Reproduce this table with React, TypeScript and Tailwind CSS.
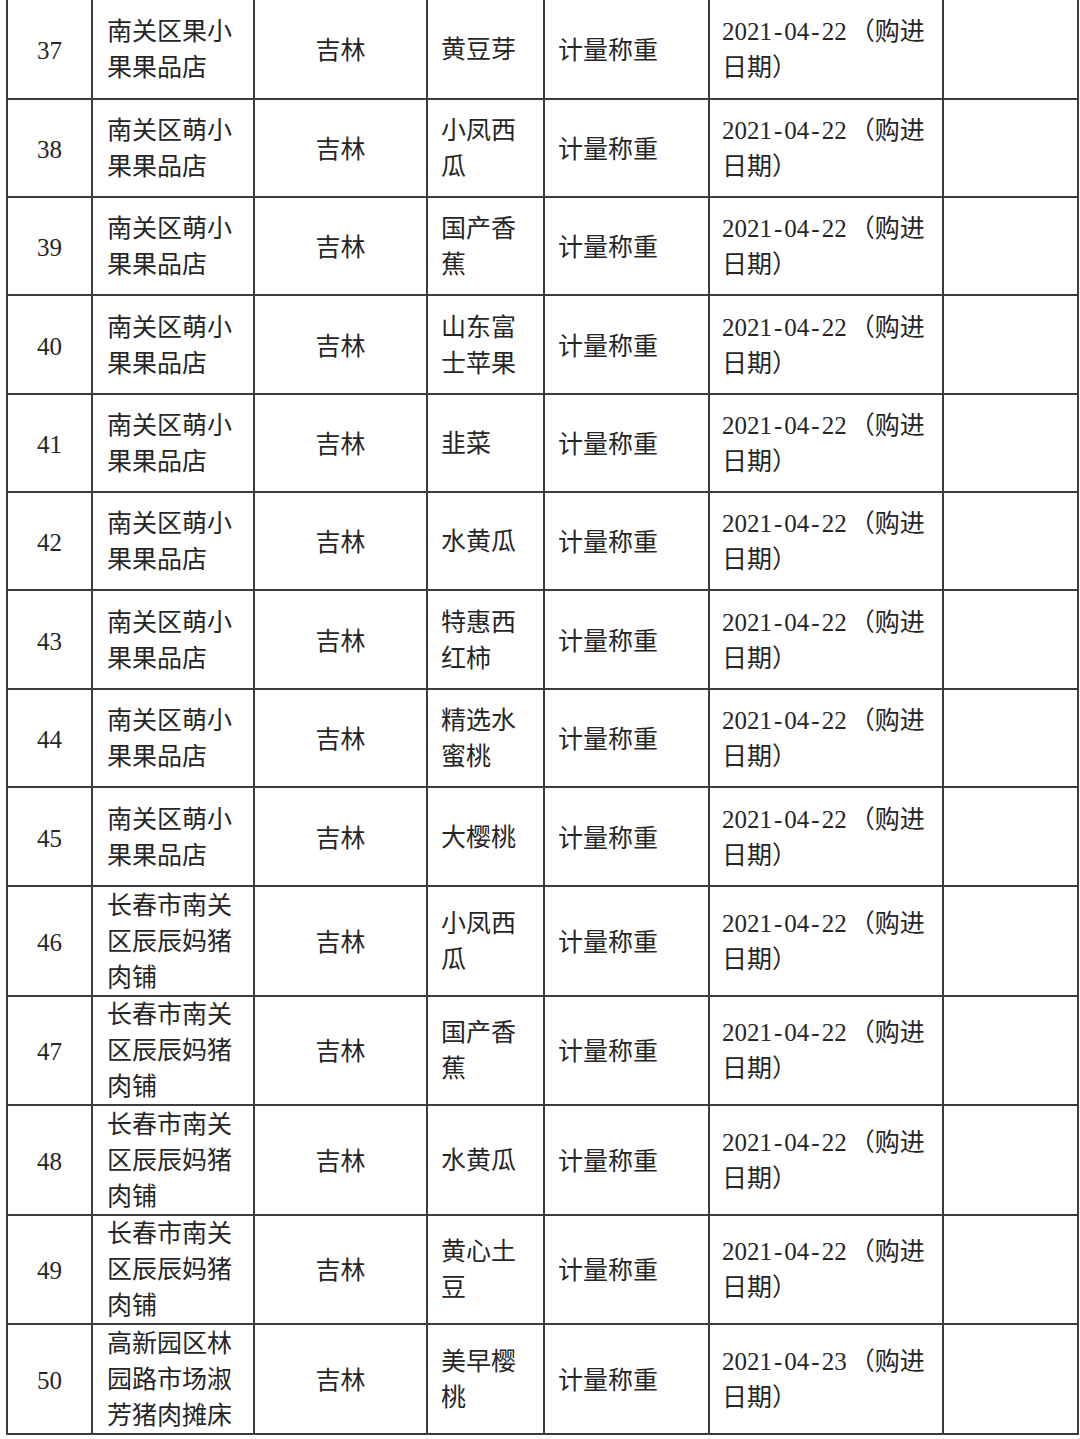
import React from "react";

type Row = {
  no: number;
  shop: string[];
  item: string[];
  date: string;
  h: number;
};

const mengxiao = ["南关区萌小", "果果品店"];
const chenchen = ["长春市南关", "区辰辰妈猪", "肉铺"];

const rows: Row[] = [
  { no: 37, shop: ["南关区果小", "果果品店"], item: ["黄豆芽"], date: "2021-04-22", h: 100 },
  { no: 38, shop: mengxiao, item: ["小凤西", "瓜"], date: "2021-04-22", h: 98 },
  { no: 39, shop: mengxiao, item: ["国产香", "蕉"], date: "2021-04-22", h: 98 },
  { no: 40, shop: mengxiao, item: ["山东富", "士苹果"], date: "2021-04-22", h: 99 },
  { no: 41, shop: mengxiao, item: ["韭菜"], date: "2021-04-22", h: 98 },
  { no: 42, shop: mengxiao, item: ["水黄瓜"], date: "2021-04-22", h: 98 },
  { no: 43, shop: mengxiao, item: ["特惠西", "红柿"], date: "2021-04-22", h: 99 },
  { no: 44, shop: mengxiao, item: ["精选水", "蜜桃"], date: "2021-04-22", h: 98 },
  { no: 45, shop: mengxiao, item: ["大樱桃"], date: "2021-04-22", h: 99 },
  { no: 46, shop: chenchen, item: ["小凤西", "瓜"], date: "2021-04-22", h: 109 },
  { no: 47, shop: chenchen, item: ["国产香", "蕉"], date: "2021-04-22", h: 110 },
  { no: 48, shop: chenchen, item: ["水黄瓜"], date: "2021-04-22", h: 109 },
  { no: 49, shop: chenchen, item: ["黄心土", "豆"], date: "2021-04-22", h: 110 },
  { no: 50, shop: ["高新园区林", "园路市场淑", "芳猪肉摊床"], item: ["美早樱", "桃"], date: "2021-04-23", h: 110 },
];

const cell = "flex items-center border-r-2 border-b-2 border-[#3c3c3c]";

function Lines({ lines }: { lines: string[] }) {
  return (
    <div className="relative top-[1px] whitespace-nowrap">
      {lines.map((l, i) => (
        <div key={i}>{l}</div>
      ))}
    </div>
  );
}

// the source font has wide hyphens, so pad them a little
function DateText({ date }: { date: string }) {
  const parts = date.split("-");
  return (
    <div className="relative top-[1px] whitespace-nowrap">
      <div>
        {parts.map((p, i) => (
          <React.Fragment key={i}>
            {i > 0 && <span className="px-[2px]">-</span>}
            {p}
          </React.Fragment>
        ))}
        <span className="pl-[3px]">（购进</span>
      </div>
      <div>日期）</div>
    </div>
  );
}

export default function App() {
  return (
    <div
      className="w-[1080px] h-[1439px] bg-white text-[#262626] text-[25px] leading-[36px] overflow-hidden"
      style={{ fontFamily: '"Liberation Serif", "Noto Sans CJK SC", serif' }}
    >
      <div className="ml-[6px] w-[1073px] border-l-2 border-[#3c3c3c]">
        {rows.map((r) => (
          <div
            key={r.no}
            className="grid grid-cols-[85px_162px_173px_117px_165px_234px_135px]"
            style={{ height: r.h }}
          >
            <div className={`${cell} justify-center`}>
              <span className="relative top-[2px]">{r.no}</span>
            </div>
            <div className={`${cell} pl-[14px]`}>
              <Lines lines={r.shop} />
            </div>
            <div className={`${cell} justify-center`}>
              <span className="relative top-[2px]">吉林</span>
            </div>
            <div className={`${cell} pl-[13px]`}>
              <Lines lines={r.item} />
            </div>
            <div className={`${cell} pl-[13px]`}>
              <span className="relative top-[2px]">计量称重</span>
            </div>
            <div className={`${cell} pl-[12px]`}>
              <DateText date={r.date} />
            </div>
            <div className={cell}></div>
          </div>
        ))}
      </div>
    </div>
  );
}
